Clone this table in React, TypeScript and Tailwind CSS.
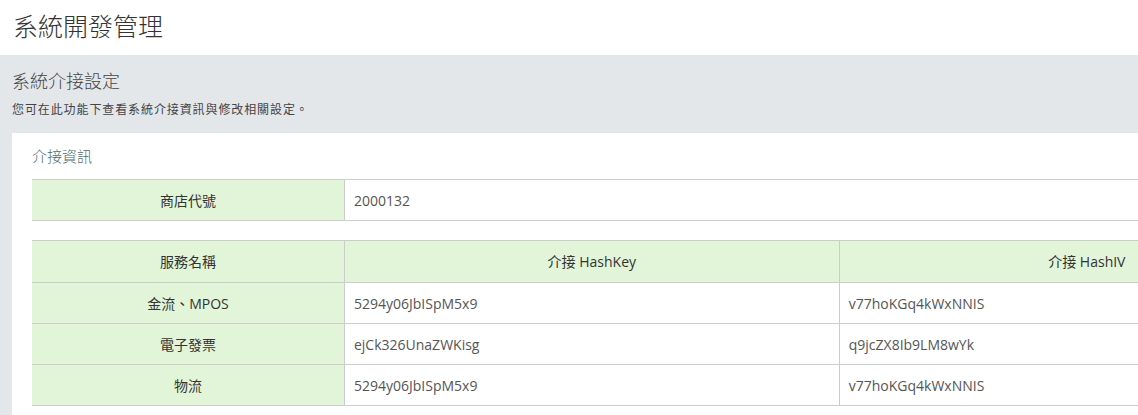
const services = [
  { name: '金流、MPOS', key: '5294y06JbISpM5x9', iv: 'v77hoKGq4kWxNNIS' },
  { name: '電子發票', key: 'ejCk326UnaZWKisg', iv: 'q9jcZX8Ib9LM8wYk' },
  { name: '物流', key: '5294y06JbISpM5x9', iv: 'v77hoKGq4kWxNNIS' },
]

export default function App() {
  return (
    <div
      className="h-[415px] w-full overflow-hidden bg-[#e4e7ea]"
      style={{ fontFamily: '"Open Sans", "Noto Sans CJK TC", sans-serif' }}
    >
      <div className="w-[1366px]">
        {/* Page header */}
        <header className="h-[55px] bg-white px-[13px] pt-[8px]">
          <h1 className="text-[25px] font-light leading-[36px] text-[#333]">系統開發管理</h1>
        </header>

        {/* Section */}
        <section className="px-[12px] pt-[12px]">
          <h2 className="text-[18px] font-light leading-[28px] text-[#444]">系統介接設定</h2>
          <p className="mt-[6px] text-[12px] leading-[18px] tracking-[0.9px] text-[#444]">
            您可在此功能下查看系統介接資訊與修改相關設定。
          </p>

          <div className="mt-[14px] bg-white px-[20px] pt-[12px] pb-[40px]">
            <h3 className="text-[15px] font-light leading-[22px] text-[#4d6b6b]">介接資訊</h3>

            {/* Store id */}
            <table className="mt-[12px] w-full border-collapse text-[14px]">
              <tbody>
                <tr className="h-[41px]">
                  <th className="w-[24%] border-y border-[#ccc] bg-[#e2f5d9] font-normal text-[#333]">商店代號</th>
                  <td className="border border-[#ccc] border-r-0 px-[9px] text-[#555]">2000132</td>
                </tr>
              </tbody>
            </table>

            {/* Service keys */}
            <table className="mt-[19px] w-full border-collapse text-[14px]">
              <thead>
                <tr className="h-[42px] bg-[#e2f5d9]">
                  <th className="w-[24%] border-y border-[#ccc] font-normal text-[#333]">服務名稱</th>
                  <th className="w-[38%] border border-[#ccc] font-normal text-[#333]">介接 HashKey</th>
                  <th className="w-[38%] border border-[#ccc] border-r-0 font-normal text-[#333]">介接 HashIV</th>
                </tr>
              </thead>
              <tbody>
                {services.map((s) => (
                  <tr key={s.name} className="h-[41px]">
                    <th className="border-y border-[#ccc] bg-[#e2f5d9] font-normal text-[#333]">{s.name}</th>
                    <td className="border border-[#ccc] px-[9px] text-[#555]">{s.key}</td>
                    <td className="border border-[#ccc] border-r-0 px-[9px] text-[#555]">{s.iv}</td>
                  </tr>
                ))}
              </tbody>
            </table>
          </div>
        </section>
      </div>
    </div>
  )
}
